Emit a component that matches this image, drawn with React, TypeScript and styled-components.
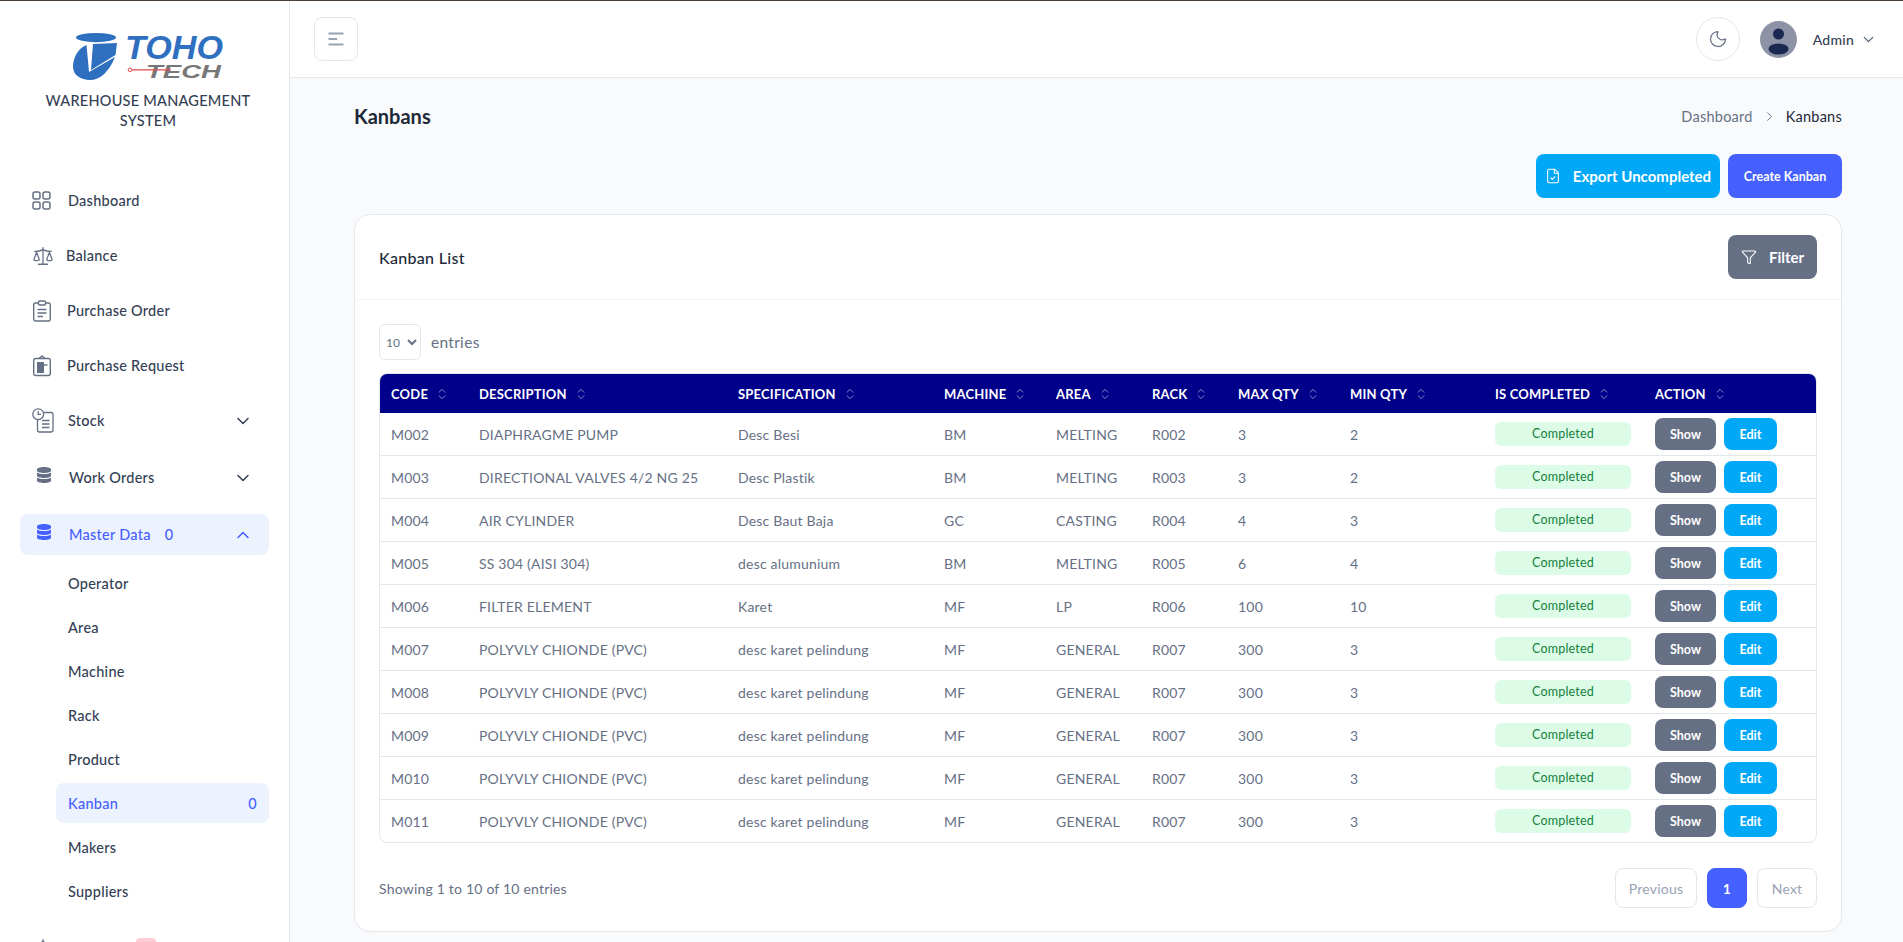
import React from 'react';
import styled, { createGlobalStyle } from 'styled-components';
import { ChevronDown, ChevronRight, ChevronUp, ChevronsUpDown, FileCheck, Filter, Moon, Scale } from 'lucide-react';
import { FaDatabase } from 'react-icons/fa';

const GlobalStyle = createGlobalStyle`
  html, body { margin: 0; padding: 0; height: 100%; overflow: hidden; }
  body { font-family: Lato, "Noto Sans", Arial, sans-serif; color: #1d2939; background: #f9fafb; }
  * { box-sizing: border-box; }
`;

const Page = styled.div`
  display: flex;
  flex-direction: column;
  height: 942px;
  overflow: hidden;
  border-top: 1px solid #4b4038;
`;

const Shell = styled.div`
  display: flex;
  flex: 1;
  min-height: 0;
`;

const Sidebar = styled.aside`
  width: 290px;
  flex: none;
  background: #fff;
  border-right: 1px solid #e4e7ec;
  padding: 0 20px;
  overflow: hidden;
`;

const Brand = styled.div`
  display: flex;
  flex-direction: column;
  align-items: center;
  padding: 32px 0 0 7px;
  height: 179px;
`;

const BrandName = styled.div`
  width: 215px;
  margin-top: 11px;
  text-align: center;
  font-size: 14.5px;
  line-height: 20px;
  font-weight: 500;
  letter-spacing: 0.25px;
  color: #344054;
`;

const NavList = styled.nav`
  display: flex;
  flex-direction: column;
`;

const NavItem = styled.div<{ $active?: boolean; $gap?: number }>`
  display: flex;
  align-items: center;
  height: 41px;
  padding: 0 12px;
  margin-bottom: ${({ $gap }) => $gap ?? 14}px;
  border-radius: 8px;
  font-size: 14.5px;
  font-weight: 500;
  letter-spacing: 0.25px;
  color: ${({ $active }) => ($active ? '#465fff' : '#344054')};
  background: ${({ $active }) => ($active ? '#ecf3ff' : 'transparent')};
`;

const NavIcon = styled.span<{ $width: number; $tint?: boolean }>`
  display: flex;
  flex: none;
  width: ${({ $width }) => $width}px;
  color: ${({ $tint }) => ($tint ? '#465fff' : '#667085')};
`;

const DbIconBox = styled(NavIcon)`
  padding-left: 4px;
  margin-bottom: 6px;
`;

const NavCount = styled.span`
  margin-left: 14px;
`;

const NavCaret = styled.span`
  display: flex;
  margin-left: auto;
  margin-right: 4px;
`;

const AlertCount = styled.span`
  margin-left: 18px;
  width: 20px;
  height: 20px;
  border-radius: 4px;
  background: #fecdd3;
  color: #e11d48;
  font-size: 12px;
  text-align: center;
  line-height: 20px;
`;

const SubList = styled.div`
  display: flex;
  flex-direction: column;
  gap: 4px;
  margin: -6px 0 16px 36px;
`;

const SubItem = styled.div<{ $active?: boolean }>`
  display: flex;
  align-items: center;
  justify-content: space-between;
  height: 40px;
  padding: 0 12px;
  border-radius: 8px;
  font-size: 14.5px;
  font-weight: 500;
  letter-spacing: 0.25px;
  color: ${({ $active }) => ($active ? '#465fff' : '#344054')};
  background: ${({ $active }) => ($active ? '#ecf3ff' : 'transparent')};
`;

const Main = styled.main`
  flex: 1;
  min-width: 0;
  display: flex;
  flex-direction: column;
`;

const TopBar = styled.header`
  flex: none;
  height: 77px;
  display: flex;
  align-items: center;
  justify-content: space-between;
  padding: 0 26px 0 24px;
  background: #fff;
  border-bottom: 1px solid #e4e7ec;
`;

const MenuButton = styled.button`
  display: flex;
  align-items: center;
  justify-content: center;
  width: 44px;
  height: 44px;
  padding: 0;
  background: #fff;
  border: 1px solid #e4e7ec;
  border-radius: 8px;
  color: #98a2b3;
`;

const UserArea = styled.div`
  display: flex;
  align-items: center;
`;

const ThemeButton = styled.button`
  display: flex;
  align-items: center;
  justify-content: center;
  width: 44px;
  height: 44px;
  padding: 0;
  margin-right: 20px;
  background: #fff;
  border: 1px solid #e4e7ec;
  border-radius: 50%;
  color: #667085;
`;

const UserName = styled.span`
  margin: 0 6px 0 16px;
  font-size: 14px;
  font-weight: 500;
  letter-spacing: 0.25px;
  color: #344054;
`;

const Content = styled.div`
  flex: 1;
  padding: 0 61px 0 64px;
`;

const TitleRow = styled.div`
  display: flex;
  align-items: center;
  justify-content: space-between;
  height: 76px;
`;

const PageTitle = styled.h1`
  margin: 0;
  font-size: 20px;
  line-height: 28px;
  font-weight: 700;
  color: #1d2939;
`;

const Breadcrumb = styled.div`
  display: flex;
  align-items: center;
  gap: 9px;
  font-size: 14.5px;
  letter-spacing: 0.25px;
  color: #667085;
`;

const Current = styled.span`
  color: #1d2939;
`;

const ActionRow = styled.div`
  display: flex;
  justify-content: flex-end;
  gap: 8px;
  margin-bottom: 16px;
`;

const FillButton = styled.button<{ $bg: string; $w: number; $h: number; $size: number }>`
  display: inline-flex;
  align-items: center;
  justify-content: center;
  gap: 12px;
  width: ${({ $w }) => $w}px;
  height: ${({ $h }) => $h}px;
  padding: 0;
  border: 0;
  border-radius: 8px;
  background: ${({ $bg }) => $bg};
  color: #fff;
  font-family: inherit;
  font-size: ${({ $size }) => $size}px;
  font-weight: 700;
  white-space: nowrap;
`;

const Card = styled.section`
  background: #fff;
  border: 1px solid #e4e7ec;
  border-radius: 16px;
`;

const CardHead = styled.div`
  display: flex;
  align-items: center;
  justify-content: space-between;
  height: 85px;
  padding: 0 24px;
  border-bottom: 1px solid #f2f4f7;
`;

const CardTitle = styled.h2`
  margin: 0;
  font-size: 16px;
  font-weight: 500;
  letter-spacing: 0.3px;
  color: #1d2939;
`;

const CardBody = styled.div`
  padding: 24px 24px 23px;
`;

const EntriesRow = styled.div`
  display: flex;
  align-items: center;
  gap: 10px;
  height: 36px;
  margin-bottom: 13px;
  font-size: 15.5px;
  letter-spacing: 0.3px;
  color: #667085;
`;

const EntriesSelect = styled.select`
  width: 42px;
  height: 36px;
  padding: 0 0 0 2px;
  background: #fff;
  border: 1px solid #e4e7ec;
  border-radius: 6px;
  font-family: inherit;
  font-size: 12px;
  color: #667085;
`;

const TableWrap = styled.div`
  border: 1px solid #e4e7ec;
  border-radius: 8px;
  overflow: hidden;
`;

const Table = styled.table`
  width: 100%;
  table-layout: fixed;
  border-collapse: separate;
  border-spacing: 0;
`;

const HeadCell = styled.th`
  height: 39px;
  padding: 0 11px;
  background: #00008b;
  color: #fff;
  font-size: 13px;
  font-weight: 700;
  text-align: left;
  letter-spacing: 0.2px;
  white-space: nowrap;
`;

const HeadInner = styled.span`
  display: inline-flex;
  align-items: center;
  gap: 7px;
`;

const SortIcon = styled(ChevronsUpDown)`
  color: #a5a5d8;
`;

const BodyRow = styled.tr`
  &:last-child td {
    height: 42px;
    border-bottom: 0;
  }
`;

const Cell = styled.td`
  height: 43px;
  padding: 0 11px;
  border-bottom: 1px solid #e4e7ec;
  font-size: 14px;
  letter-spacing: 0.2px;
  color: #667085;
  white-space: nowrap;
`;

const StatusBadge = styled.span`
  display: block;
  width: 136px;
  height: 24px;
  line-height: 24px;
  text-align: center;
  border-radius: 6px;
  background: #dcfce7;
  color: #15803d;
  font-size: 12.5px;
  letter-spacing: 0.2px;
`;

const RowActions = styled.div`
  display: flex;
  gap: 8px;
`;

const SmallButton = styled.button<{ $bg: string; $w: number }>`
  width: ${({ $w }) => $w}px;
  height: 32px;
  padding: 0;
  border: 0;
  border-radius: 8px;
  background: ${({ $bg }) => $bg};
  color: #fff;
  font-family: inherit;
  font-size: 12.5px;
  font-weight: 700;
`;

const TableFoot = styled.div`
  display: flex;
  align-items: center;
  justify-content: space-between;
  margin-top: 25px;
  font-size: 14px;
  letter-spacing: 0.2px;
  color: #667085;
`;

const Pager = styled.div`
  display: flex;
  gap: 10px;
`;

const PagerButton = styled.button<{ $w: number; $current?: boolean }>`
  width: ${({ $w }) => $w}px;
  height: 40px;
  padding: 0;
  border: 1px solid ${({ $current }) => ($current ? '#465fff' : '#e4e7ec')};
  border-radius: 8px;
  background: ${({ $current }) => ($current ? '#465fff' : '#fff')};
  color: ${({ $current }) => ($current ? '#fff' : '#98a2b3')};
  font-family: inherit;
  font-size: 14px;
  font-weight: ${({ $current }) => ($current ? 700 : 400)};
  letter-spacing: 0.2px;
`;

const TohoLogo = () => (
  <svg width="150" height="47" viewBox="70 33 150 47">
    <ellipse cx="93" cy="37.6" rx="20" ry="4.6" fill="#2f6fc0" />
    <path d="M83.5 45 C75 48 70 58 70 67 C70 75 78 80 87 80 C97 80 106 72 112 57 L86 72 Z" fill="#2f6fc0" />
    <path d="M90 44 L114 43 L112.5 55 L88 70 Z" fill="#2f6fc0" />
    <text x="122" y="59" fontFamily="Liberation Sans" fontStyle="italic" fontWeight="700" fontSize="33" fill="#2f6fc0" textLength="98" lengthAdjust="spacingAndGlyphs">TOHO</text>
    <text x="143" y="78" fontFamily="Liberation Sans" fontStyle="italic" fontWeight="700" fontSize="19" fill="#777" textLength="75" lengthAdjust="spacingAndGlyphs">TECH</text>
    <path d="M127 69.8 H168" stroke="#e5484d" strokeWidth="1.3" />
    <circle cx="127" cy="69.8" r="1.8" fill="#fff" stroke="#e5484d" strokeWidth="1" />
  </svg>
);

const GridIcon = () => (
  <svg width="19" height="19" viewBox="0 0 19 19" fill="none" stroke="currentColor" strokeWidth="1.5">
    <rect x="1" y="1" width="7" height="7" rx="2" />
    <rect x="11" y="1" width="7" height="7" rx="2" />
    <rect x="1" y="11" width="7" height="7" rx="2" />
    <rect x="11" y="11" width="7" height="7" rx="2" />
  </svg>
);

const OrderIcon = () => (
  <svg width="20" height="22" viewBox="0 0 20 22" fill="none" stroke="currentColor" strokeWidth="1.4">
    <rect x="1.7" y="3" width="16.6" height="18" rx="2" />
    <rect x="6.5" y="1" width="7" height="4" rx="1" fill="#fff" />
    <path d="M5.5 9.5 H14.5 M5.5 13 H14.5 M5.5 16.5 H11" />
  </svg>
);

const RequestIcon = () => (
  <svg width="20" height="22" viewBox="0 0 20 22" fill="none" stroke="currentColor" strokeWidth="1.4">
    <rect x="1.7" y="3.5" width="16.6" height="17" rx="2" />
    <path d="M7 3.5 L10 1 L13 3.5" />
    <path d="M5 7 H12 V18 H5 Z" fill="currentColor" stroke="none" />
    <path d="M12 10 H15.5" />
  </svg>
);

const StockIcon = () => (
  <svg width="22" height="25" viewBox="0 0 22 25" fill="none" stroke="currentColor" strokeWidth="1.3">
    <circle cx="6.2" cy="6.2" r="5.4" fill="#fff" />
    <path d="M6.2 3.2 V6.4 H9" />
    <path d="M11.5 4.5 H19 A2 2 0 0 1 21 6.5 V22 A2 2 0 0 1 19 24 H7.5 A2 2 0 0 1 5.5 22 V12" />
    <path d="M10 12.5 H17.5 M10 16 H17.5 M10 19.5 H17.5" />
  </svg>
);

const MenuIcon = () => (
  <svg width="16" height="14" viewBox="0 0 16 14" fill="none" stroke="currentColor" strokeWidth="2">
    <path d="M0.5 1.5 H15.5 M0.5 7 H9 M0.5 12.5 H15.5" />
  </svg>
);

const UserAvatar = () => (
  <svg width="37" height="37" viewBox="0 0 37 37">
    <circle cx="18.5" cy="18.5" r="18.5" fill="#8d92a6" />
    <circle cx="18.5" cy="13" r="5.5" fill="#1b2850" />
    <ellipse cx="18.5" cy="28" rx="10" ry="5.6" fill="#1b2850" />
  </svg>
);

const columns = [
  { label: 'CODE', width: 88 },
  { label: 'DESCRIPTION', width: 259 },
  { label: 'SPECIFICATION', width: 206 },
  { label: 'MACHINE', width: 112 },
  { label: 'AREA', width: 96 },
  { label: 'RACK', width: 86 },
  { label: 'MAX QTY', width: 112 },
  { label: 'MIN QTY', width: 145 },
  { label: 'IS COMPLETED', width: 160 },
  { label: 'ACTION', width: 173 },
];

const rows = [
  ['M002', 'DIAPHRAGME PUMP', 'Desc Besi', 'BM', 'MELTING', 'R002', '3', '2'],
  ['M003', 'DIRECTIONAL VALVES 4/2 NG 25', 'Desc Plastik', 'BM', 'MELTING', 'R003', '3', '2'],
  ['M004', 'AIR CYLINDER', 'Desc Baut Baja', 'GC', 'CASTING', 'R004', '4', '3'],
  ['M005', 'SS 304 (AISI 304)', 'desc alumunium', 'BM', 'MELTING', 'R005', '6', '4'],
  ['M006', 'FILTER ELEMENT', 'Karet', 'MF', 'LP', 'R006', '100', '10'],
  ['M007', 'POLYVLY CHIONDE (PVC)', 'desc karet pelindung', 'MF', 'GENERAL', 'R007', '300', '3'],
  ['M008', 'POLYVLY CHIONDE (PVC)', 'desc karet pelindung', 'MF', 'GENERAL', 'R007', '300', '3'],
  ['M009', 'POLYVLY CHIONDE (PVC)', 'desc karet pelindung', 'MF', 'GENERAL', 'R007', '300', '3'],
  ['M010', 'POLYVLY CHIONDE (PVC)', 'desc karet pelindung', 'MF', 'GENERAL', 'R007', '300', '3'],
  ['M011', 'POLYVLY CHIONDE (PVC)', 'desc karet pelindung', 'MF', 'GENERAL', 'R007', '300', '3'],
];

const masterItems = ['Operator', 'Area', 'Machine', 'Rack', 'Product', 'Kanban', 'Makers', 'Suppliers'];

const App: React.FC = () => (
  <>
    <GlobalStyle />
    <Page>
      <Shell>
        <Sidebar>
          <Brand>
            <TohoLogo />
            <BrandName>WAREHOUSE MANAGEMENT SYSTEM</BrandName>
          </Brand>
          <NavList>
            <NavItem><NavIcon $width={36}><GridIcon /></NavIcon>Dashboard</NavItem>
            <NavItem><NavIcon $width={34}><Scale size={22} strokeWidth={1.4} /></NavIcon>Balance</NavItem>
            <NavItem><NavIcon $width={35}><OrderIcon /></NavIcon>Purchase Order</NavItem>
            <NavItem><NavIcon $width={35}><RequestIcon /></NavIcon>Purchase Request</NavItem>
            <NavItem $gap={16}>
              <NavIcon $width={36}><StockIcon /></NavIcon>Stock
              <NavCaret><ChevronDown size={20} strokeWidth={1.8} /></NavCaret>
            </NavItem>
            <NavItem $gap={16}>
              <DbIconBox $width={37}><FaDatabase size={16} /></DbIconBox>Work Orders
              <NavCaret><ChevronDown size={20} strokeWidth={1.8} /></NavCaret>
            </NavItem>
            <NavItem $active $gap={14}>
              <DbIconBox $width={37} $tint><FaDatabase size={16} /></DbIconBox>Master Data
              <NavCount>0</NavCount>
              <NavCaret><ChevronUp size={20} strokeWidth={1.8} /></NavCaret>
            </NavItem>
            <SubList>
              {masterItems.map((name) => (
                <SubItem key={name} $active={name === 'Kanban'}>
                  {name}
                  {name === 'Kanban' && <span>0</span>}
                </SubItem>
              ))}
            </SubList>
            <NavItem>
              <NavIcon $width={34}><Scale size={22} strokeWidth={1.4} /></NavIcon>Restock
              <AlertCount>3</AlertCount>
            </NavItem>
          </NavList>
        </Sidebar>
        <Main>
          <TopBar>
            <MenuButton aria-label="Toggle menu"><MenuIcon /></MenuButton>
            <UserArea>
              <ThemeButton aria-label="Toggle theme"><Moon size={20} strokeWidth={1.5} /></ThemeButton>
              <UserAvatar />
              <UserName>Admin</UserName>
              <ChevronDown size={17} strokeWidth={1.6} color="#475467" />
            </UserArea>
          </TopBar>
          <Content>
            <TitleRow>
              <PageTitle>Kanbans</PageTitle>
              <Breadcrumb>
                Dashboard
                <ChevronRight size={15} strokeWidth={1.5} />
                <Current>Kanbans</Current>
              </Breadcrumb>
            </TitleRow>
            <ActionRow>
              <FillButton $bg="#00a8f7" $w={184} $h={44} $size={15}>
                <FileCheck size={16} strokeWidth={1.6} />
                Export Uncompleted
              </FillButton>
              <FillButton $bg="#465fff" $w={114} $h={44} $size={12.5}>Create Kanban</FillButton>
            </ActionRow>
            <Card>
              <CardHead>
                <CardTitle>Kanban List</CardTitle>
                <FillButton $bg="#667085" $w={89} $h={44} $size={15}>
                  <Filter size={16} strokeWidth={1.6} />
                  Filter
                </FillButton>
              </CardHead>
              <CardBody>
                <EntriesRow>
                  <EntriesSelect defaultValue="10">
                    <option value="10">10</option>
                    <option value="25">25</option>
                    <option value="50">50</option>
                  </EntriesSelect>
                  entries
                </EntriesRow>
                <TableWrap>
                  <Table>
                    <colgroup>
                      {columns.map((col) => (
                        <col key={col.label} width={col.width} />
                      ))}
                    </colgroup>
                    <thead>
                      <tr>
                        {columns.map((col) => (
                          <HeadCell key={col.label}>
                            <HeadInner>
                              {col.label}
                              <SortIcon size={14} strokeWidth={1.4} />
                            </HeadInner>
                          </HeadCell>
                        ))}
                      </tr>
                    </thead>
                    <tbody>
                      {rows.map((row) => (
                        <BodyRow key={row[0]}>
                          {row.map((value, i) => (
                            <Cell key={i}>{value}</Cell>
                          ))}
                          <Cell><StatusBadge>Completed</StatusBadge></Cell>
                          <Cell>
                            <RowActions>
                              <SmallButton $bg="#667085" $w={61}>Show</SmallButton>
                              <SmallButton $bg="#00a8f7" $w={53}>Edit</SmallButton>
                            </RowActions>
                          </Cell>
                        </BodyRow>
                      ))}
                    </tbody>
                  </Table>
                </TableWrap>
                <TableFoot>
                  Showing 1 to 10 of 10 entries
                  <Pager>
                    <PagerButton $w={82}>Previous</PagerButton>
                    <PagerButton $w={40} $current>1</PagerButton>
                    <PagerButton $w={60}>Next</PagerButton>
                  </Pager>
                </TableFoot>
              </CardBody>
            </Card>
          </Content>
        </Main>
      </Shell>
    </Page>
  </>
);

export default App;
